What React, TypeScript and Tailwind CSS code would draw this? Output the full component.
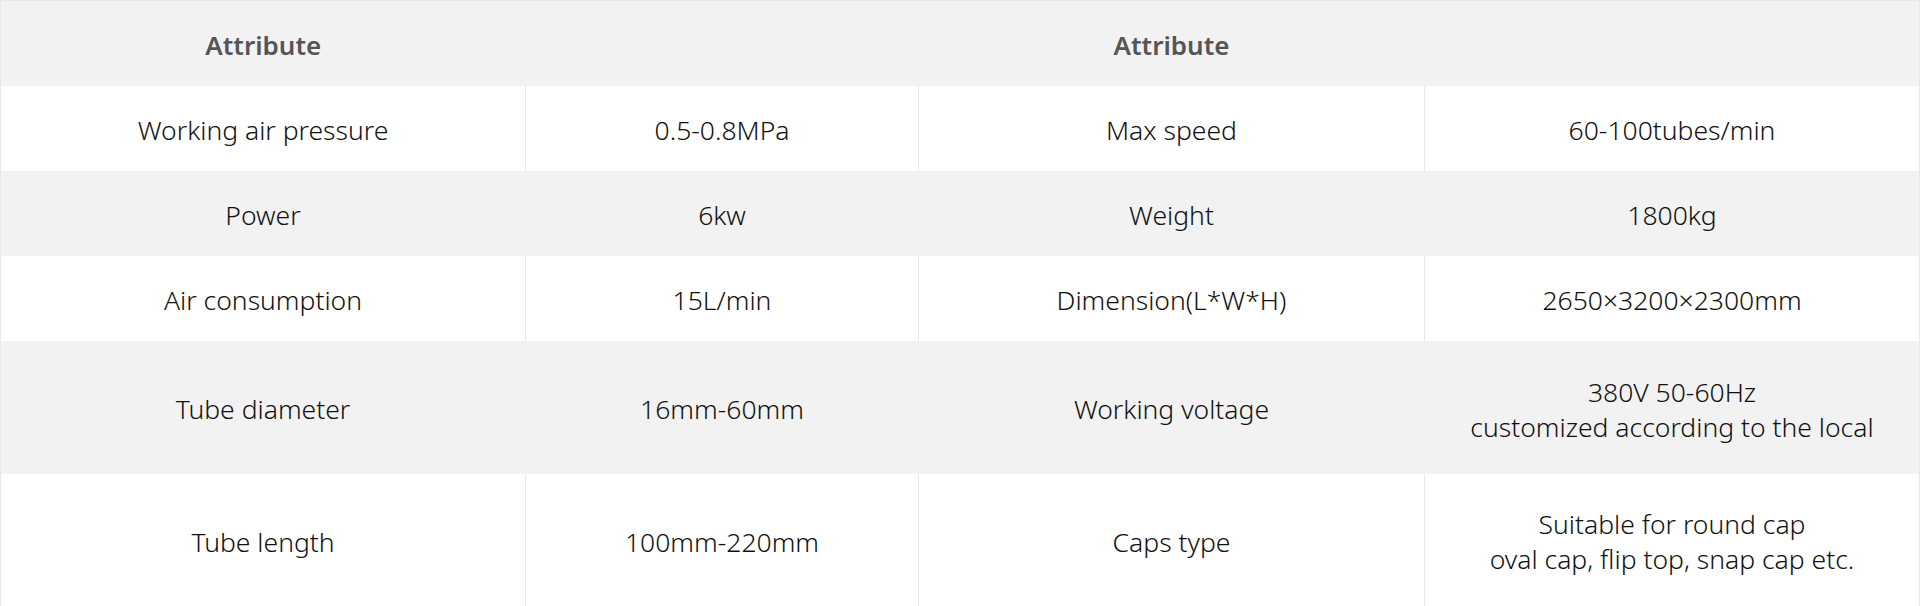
const rows: { cells: string[][]; tall?: boolean }[] = [
  { cells: [['Working air pressure'], ['0.5-0.8MPa'], ['Max speed'], ['60-100tubes/min']] },
  { cells: [['Power'], ['6kw'], ['Weight'], ['1800kg']] },
  { cells: [['Air consumption'], ['15L/min'], ['Dimension(L*W*H)'], ['2650×3200×2300mm']] },
  {
    cells: [['Tube diameter'], ['16mm-60mm'], ['Working voltage'], ['380V 50-60Hz', 'customized according to the local']],
    tall: true,
  },
  {
    cells: [['Tube length'], ['100mm-220mm'], ['Caps type'], ['Suitable for round cap', 'oval cap, flip top, snap cap etc.']],
    tall: true,
  },
];

export default function App() {
  return (
    <div className="w-[1920px] h-[606px] bg-white font-['Noto_Sans','Liberation_Sans',sans-serif]">
      <table className="w-full table-fixed border-collapse border border-[#e8e8e8] text-[26.5px] leading-[35px] font-[350] text-[#111]">
        <colgroup>
          <col className="w-[525px]" />
          <col className="w-[393px]" />
          <col className="w-[506px]" />
          <col />
        </colgroup>
        <thead>
          <tr className="h-[85px] bg-[#f2f2f2] text-[#555] text-[26px]">
            <th className="font-semibold pt-[5px]">Attribute</th>
            <th />
            <th className="font-semibold pt-[5px]">Attribute</th>
            <th />
          </tr>
        </thead>
        <tbody>
          {rows.map((row, i) => (
            <tr key={i} className={`${row.tall ? 'h-[133px]' : 'h-[85px]'} ${i % 2 === 1 ? 'bg-[#f2f2f2]' : 'bg-white'}`}>
              {row.cells.map((lines, j) => (
                <td
                  key={j}
                  className={`pt-[5px] text-center align-middle ${j > 0 ? (i % 2 === 1 ? 'border-l border-[#f2f2f2]' : 'border-l border-[#e8e8e8]') : ''}`}
                >
                  {lines.map((l, k) => (
                    <div key={k}>{l}</div>
                  ))}
                </td>
              ))}
            </tr>
          ))}
        </tbody>
      </table>
    </div>
  );
}
